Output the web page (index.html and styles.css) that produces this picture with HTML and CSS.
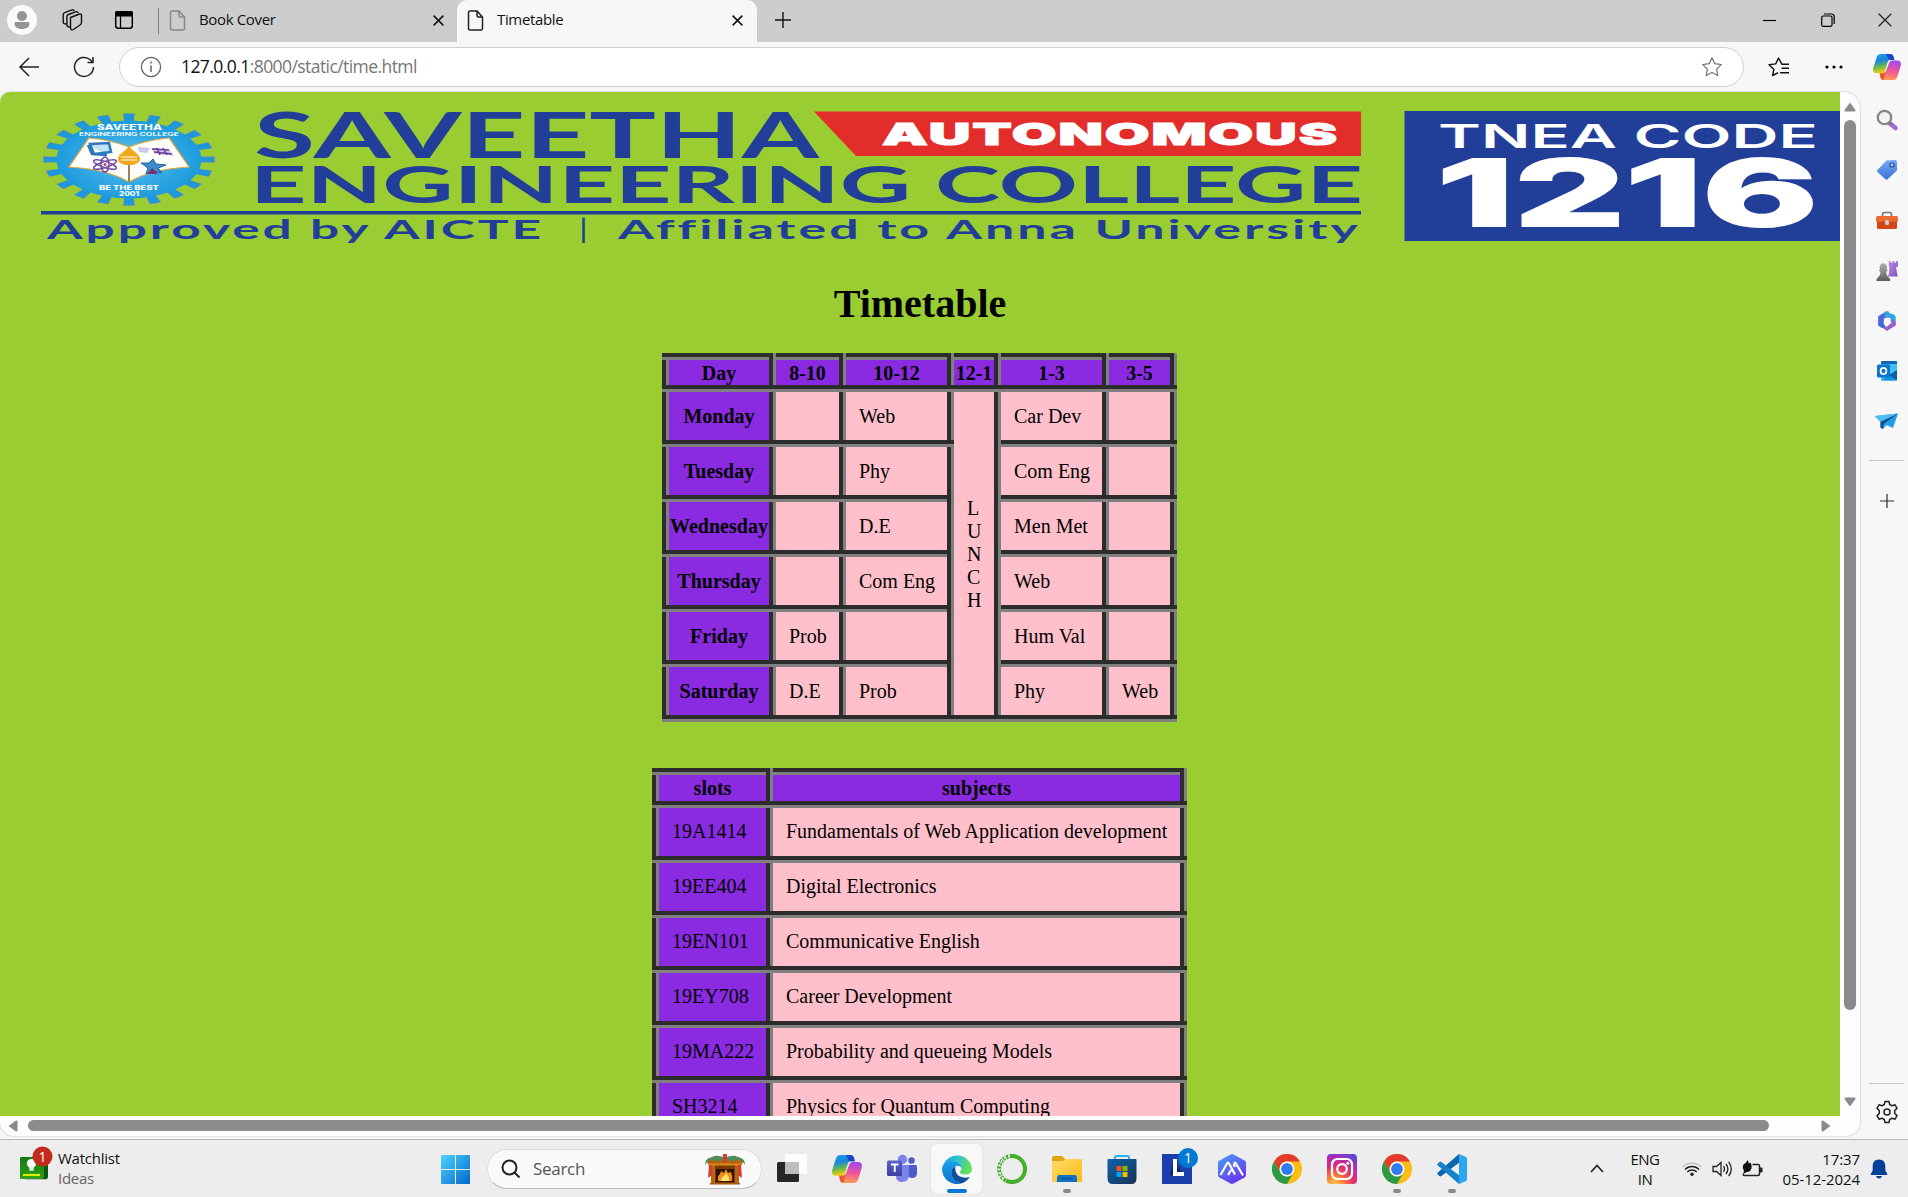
FILE: index.html
```html
<!DOCTYPE html>
<html lang="en">
<head>
<meta charset="utf-8">
<title>Timetable</title>
<link rel="stylesheet" href="styles.css">
</head>
<body>
<svg class="defs" width="0" height="0">
  <defs>
    <linearGradient id="cpA" x1="0" y1="0" x2="0.2" y2="1"><stop offset="0" stop-color="#1b9cf0"/><stop offset=".4" stop-color="#1f86d8"/><stop offset=".65" stop-color="#5bb560"/><stop offset="1" stop-color="#f3d000"/></linearGradient>
    <linearGradient id="cpB" x1="0.5" y1="0" x2="0.3" y2="1"><stop offset="0" stop-color="#a24be8"/><stop offset=".5" stop-color="#f0559a"/><stop offset="1" stop-color="#ffa04a"/></linearGradient>
    <linearGradient id="win" x1="0" y1="0" x2="1" y2="1"><stop offset="0" stop-color="#4fd4ff"/><stop offset="1" stop-color="#0067cc"/></linearGradient>
    <linearGradient id="edgeA" x1="0" y1="0" x2="1" y2=".3"><stop offset="0" stop-color="#1b9de2"/><stop offset=".5" stop-color="#2cc3d0"/><stop offset="1" stop-color="#62e05a"/></linearGradient>
    <linearGradient id="edgeB" x1="0" y1="0" x2="0" y2="1"><stop offset="0" stop-color="#1ba0e8"/><stop offset="1" stop-color="#0873d2"/></linearGradient>
    <linearGradient id="fold" x1="0" y1="0" x2="1" y2="1"><stop offset="0" stop-color="#ffdc6b"/><stop offset="1" stop-color="#fbbc16"/></linearGradient>
    <linearGradient id="store" x1="0" y1="0" x2="1" y2="1"><stop offset="0" stop-color="#0d61ab"/><stop offset="1" stop-color="#183454"/></linearGradient>
    <linearGradient id="hex" x1="0" y1="0" x2="0.6" y2="1"><stop offset="0" stop-color="#48a0f6"/><stop offset="1" stop-color="#6a35f0"/></linearGradient>
    <radialGradient id="insta" cx=".25" cy="1.05" r="1.15"><stop offset="0" stop-color="#ffd24d"/><stop offset=".3" stop-color="#fb7a35"/><stop offset=".55" stop-color="#e2306d"/><stop offset=".8" stop-color="#b32bb0"/><stop offset="1" stop-color="#5a49d6"/></radialGradient>
    <linearGradient id="tag" x1="0" y1="0" x2="0" y2="1"><stop offset="0" stop-color="#76a9f5"/><stop offset="1" stop-color="#3b6fd6"/></linearGradient>
    <linearGradient id="rook" x1="0" y1="0" x2="1" y2="1"><stop offset="0" stop-color="#c08cf0"/><stop offset="1" stop-color="#8350b8"/></linearGradient>
    <linearGradient id="pawn" x1="0" y1="0" x2="0" y2="1"><stop offset="0" stop-color="#b0b0b0"/><stop offset="1" stop-color="#5e5e5e"/></linearGradient>
    <radialGradient id="crest"><stop offset="0" stop-color="#6cc6f2"/><stop offset=".6" stop-color="#35a9e4"/><stop offset="1" stop-color="#1d9bdc"/></radialGradient>
    <linearGradient id="teams" x1="0" y1="0" x2="0" y2="1"><stop offset="0" stop-color="#5b62c8"/><stop offset="1" stop-color="#3a3f9e"/></linearGradient>
    <linearGradient id="green" x1="0" y1="0" x2="0" y2="1"><stop offset="0" stop-color="#137a13"/><stop offset="1" stop-color="#2ca016"/></linearGradient>
    <symbol id="copilot" viewBox="0 0 28 26">
      <path d="M8 0h9c2 0 3 1 3.600 3l.6 2.500h-3c-2 0-3 1-3.600 3L12 17c-.6 1.700-1.700 2.300-3.400 2.300H3.500C.6 19.300-.6 17 .3 13.800L3.600 3.500C4.400 1 5.800 0 8 0z" fill="url(#cpA)"/>
      <path d="M13 0h4c2 0 3 1 3.600 3l.8 3h-3.600c-2 0-2.500-1-3-2.500z" fill="#1a45c8"/>
      <path d="M20 26h-9c-2 0-3-1-3.600-3l-.7-3.700h3c2 0 3-1 3.600-3L16 9c.6-1.700 1.700-2.500 3.400-2.500h5.100c2.900 0 4.100 2.500 3.200 5.500l-3.300 10.500c-.8 2.500-2.200 3.500-4.400 3.500z" fill="url(#cpB)"/>
      <path d="M6.700 19.300h3c1.500 0 2.500-.7 3.200-2l-1.700 7.200c-.3 1-.8 1.500-1.500 1.400C8.300 25.600 7.700 24.500 7.400 23z" fill="#f0562f"/>
    </symbol>
    <symbol id="page" viewBox="0 0 16 21"><path d="M3 1h6.500L15 7v11.500c0 .9-.6 1.500-1.500 1.500h-11C1.600 20 1 19.400 1 18.500V2.500C1 1.600 1.600 1 2.500 1zM9.500 1v4.500c0 .9.600 1.500 1.500 1.500h4" fill="none" stroke="currentColor" stroke-width="1.500"/></symbol>
    <symbol id="cross" viewBox="0 0 12 12"><path d="M1.500 1.500l9 9m0-9l-9 9" stroke="currentColor" stroke-width="1.400" fill="none"/></symbol>
    <symbol id="plus" viewBox="0 0 18 18"><path d="M9 1v16M1 9h16" stroke="currentColor" stroke-width="1.400" fill="none"/></symbol>
    <symbol id="chrome" viewBox="0 0 30 30">
      <circle cx="15" cy="15" r="15" fill="#fbbc14"/>
      <path d="M2 7.500A15 15 0 0 1 28 7.500H15A7.500 7.500 0 0 0 8.500 18.750z" fill="#e33b2e"/>
      <path d="M2 7.500l6.500 11.250A7.500 7.500 0 0 0 21.500 18.750L15 30A15 15 0 0 1 2 7.500z" fill="#2a9a48"/>
      <circle cx="15" cy="15" r="7.400" fill="#fff"/><circle cx="15" cy="15" r="5.900" fill="#2f7cec"/>
    </symbol>
  </defs>
</svg>

<header class="tabstrip">
  <span class="cell w44"><svg width="30" height="30" viewBox="0 0 30 30"><circle cx="15" cy="15" r="15" fill="#fafafa"/><circle cx="15" cy="11" r="5" fill="#949494"/><path d="M8 17h14c1.500 5-2.500 7-7 7s-8.500-2-7-7z" fill="#949494"/></svg></span>
  <span class="cell w55"><svg width="22" height="22" viewBox="0 0 22 22" fill="none" stroke="#111" stroke-width="1.400"><path d="M9.500 8.500l9-3.500c1-.3 2 .3 2 1.300v7.400c0 1-.5 1.700-1.500 2.300l-6.500 4.500c-1.500.8-3 .2-3-1.500z"/><path d="M9 18l-1.500-.2c-1-.2-1.600-.8-1.600-1.800V7.500c0-1 .6-1.700 1.600-2L15 2.700c1-.3 1.800.2 2 1.300"/><path d="M5.500 15l-1.800-.3c-1-.2-1.500-.8-1.500-1.800V5.600c0-1 .5-1.700 1.500-2L11 .9c1-.3 1.800 0 2.200 1"/></svg></span>
  <span class="cell w50"><svg width="20" height="20" viewBox="0 0 20 20"><rect x="1.700" y="1.700" width="16.600" height="16.600" rx="2.500" fill="none" stroke="#000" stroke-width="1.500"/><path d="M1 6.500V3c0-1.200.8-2 2-2h14c1.200 0 2 .8 2 2v3.500z"/><path d="M6.500 6v12.500" stroke="#000" stroke-width="1.300"/></svg></span>
  <span class="sep"></span>
  <div class="tab">
    <svg class="doc dim" width="17" height="21"><use href="#page"/></svg><span class="tabname">Book Cover</span><svg class="x" width="13" height="13"><use href="#cross"/></svg>
  </div>
  <div class="tab active">
    <svg class="doc" width="17" height="21"><use href="#page"/></svg><span class="tabname">Timetable</span><svg class="x" width="13" height="13"><use href="#cross"/></svg>
  </div>
  <span class="cell w52"><svg width="18" height="18"><use href="#plus"/></svg></span>
  <div class="winctl">
    <svg width="14" height="14"><path d="M0 7.500h13" stroke="#000" stroke-width="1.200"/></svg>
    <svg width="14" height="14" fill="none" stroke="#000" stroke-width="1.200"><rect x=".7" y="3" width="10.300" height="10.300" rx="1.500"/><path d="M3 1h7.500c1.700 0 2.700 1 2.700 2.700V11"/></svg>
    <svg width="14" height="14"><path d="M.7.7l12.600 12.600m0-12.600L.7 13.300" stroke="#222" stroke-width="1.300"/></svg>
  </div>
</header>

<nav class="toolbar">
  <span class="cell w57"><svg width="22" height="20" fill="none" stroke="#222" stroke-width="1.500"><path d="M21 10H2m9-9l-9 9 9 9"/></svg></span>
  <span class="cell w53"><svg width="22" height="22" fill="none" stroke="#222" stroke-width="1.500"><path d="M20.500 11a9.500 9.500 0 1 1-3-7l2 2M20 1v5.500h-5.500"/></svg></span>
  <div class="address">
    <svg width="22" height="22" fill="none" stroke="#666" stroke-width="1.300"><circle cx="11" cy="11" r="9.600"/><path d="M11 9.500V16M11 5.500v2" stroke-width="1.500"/></svg>
    <span class="url"><b>127.0.0.1</b>:8000/static/time.html</span>
    <svg class="star" width="22" height="22" viewBox="0 0 22 22" fill="none" stroke="#777" stroke-width="1.300" stroke-linejoin="round"><path d="M11 1.800l2.900 5.900 6.400.9-4.700 4.500 1.200 6.400-5.800-3-5.800 3 1.200-6.400L1.700 8.600l6.400-.9z"/></svg>
  </div>
  <svg class="favs" width="22" height="20" viewBox="0 0 22 20" fill="none" stroke="#111" stroke-width="1.400" stroke-linejoin="round"><path d="M21 7.300h-7L10.500 1 7.700 6.900 1 7.700l4.800 4.600L4.600 18.500l5.600-2.800M13.500 11.200H21M12 15.700h9"/></svg>
  <svg class="dots" width="18" height="4"><circle cx="2" cy="2" r="1.600"/><circle cx="9" cy="2" r="1.600"/><circle cx="16" cy="2" r="1.600"/></svg>
  <svg class="cop" width="28" height="26"><use href="#copilot"/></svg>
</nav>

<div class="main">
  <div class="frame">
    <div class="upper">
      <main class="page">
        <svg class="banner" width="1840" height="152" viewBox="0 92 1840 152">
          <g transform="translate(129 159.500) scale(1.86 1)">
            <circle r="41" fill="none" stroke="#c3ab4e" stroke-width="11" pathLength="40" stroke-dasharray=".98 1.020" stroke-dashoffset=".49"/>
            <circle r="41" fill="none" stroke="#1e98d8" stroke-width="10" pathLength="40" stroke-dasharray=".86 1.140" stroke-dashoffset=".43"/>
            <circle r="39" fill="url(#crest)"/>
          </g>
          <path d="M89 138q22 2 40 9 18-7 40-9l20 29q-38 2-60 15-22-13-60-15z" fill="#fff" stroke="#e8a93c" stroke-width="1.200"/>
          <path d="M129 158v24" stroke="#9a8550" stroke-width="2"/>
          <path d="M129 146c5 7 11 8 11 13 0 4-5 6-11 6s-11-2-11-6c0-5 6-6 11-13z" fill="#f2a91c"/><path d="M121 157h16M121 160h16" stroke="#fff" stroke-width="1"/>
          <path d="M90 144l19-1 2 9-17 2zM88 145l4 9 15 1" fill="#bfe2f5" stroke="#2f77bd" stroke-width="2.500"/>
          <g fill="none" stroke="#6d479f" stroke-width="1.400"><ellipse cx="105" cy="164.500" rx="4" ry="7.500"/><ellipse cx="105" cy="164.500" rx="12" ry="3" transform="rotate(18 105 164.500)"/><ellipse cx="105" cy="164.500" rx="12" ry="3" transform="rotate(-18 105 164.500)"/></g><circle cx="105" cy="164.500" r="1.500" fill="#d8337c"/>
          <path d="M138 147l12 1-3 5-8-1zM151 148l18 1 5 7-19-2z" fill="#cfc6e6"/><path d="M152 149l17 1M154 152l18 2M157 148l3 7M163 148l4 7" stroke="#6b3c98" stroke-width="1.500"/>
          <path d="M141 163l8 0 4-4 3 5 10 1-8 3 4 5-9-2-7 3 2-6z" fill="#3a8dcc" stroke="#275d9b"/><path d="M147 174l5-6 6 6z" fill="#7c2d6e"/>
          <g fill="#fff" font-family="Inter, sans-serif" font-weight="800" text-anchor="start">
            <text x="97" y="130" font-size="7.500" textLength="65" lengthAdjust="spacingAndGlyphs">SAVEETHA</text>
            <text x="79" y="136" font-size="5" font-weight="600" textLength="100" lengthAdjust="spacingAndGlyphs">ENGINEERING COLLEGE</text>
            <text x="99" y="190" font-size="6" textLength="60" lengthAdjust="spacingAndGlyphs">BE THE BEST</text>
            <text x="119" y="196" font-size="6" textLength="20" lengthAdjust="spacingAndGlyphs">2001</text>
          </g>
          <g fill="#213f99" font-family="Lato, sans-serif" font-weight="700">
            <text x="254" y="158" font-size="63.500" textLength="565" lengthAdjust="spacingAndGlyphs">SAVEETHA</text>
            <text x="250" y="203" font-size="52.500" textLength="1113" lengthAdjust="spacingAndGlyphs">ENGINEERING COLLEGE</text>
            <rect x="41" y="211" width="1320" height="3.500"/>
            <g font-size="26" letter-spacing="1.500">
              <text x="47" y="239" textLength="497" lengthAdjust="spacingAndGlyphs">Approved by AICTE</text>
              <text x="580" y="239">|</text>
              <text x="618" y="239" textLength="743" lengthAdjust="spacingAndGlyphs">Affiliated to Anna University</text>
            </g>
          </g>
          <path d="M814 111.500h547V156H856z" fill="#e32d2b"/>
          <text x="882" y="144.500" font-size="30" font-weight="900" fill="#fff" stroke="#fff" stroke-width="1" letter-spacing="1" font-family="Inter, sans-serif" textLength="457" lengthAdjust="spacingAndGlyphs">AUTONOMOUS</text>
          <rect x="1404.500" y="111" width="436" height="130" fill="#213f99"/>
          <text x="1438" y="147.500" font-size="32.500" font-weight="600" fill="#fff" font-family="Inter, sans-serif" textLength="380" lengthAdjust="spacingAndGlyphs">TNEA CODE</text>
          <text x="1437" y="226" font-size="92" font-weight="800" fill="#fff" stroke="#fff" stroke-width="2" font-family="Inter, sans-serif" textLength="381" lengthAdjust="spacingAndGlyphs">1216</text>
        </svg>
        <h1>Timetable</h1>
        <table class="week">
          <colgroup><col class="c1"><col class="c2"><col class="c3"><col class="c4"><col class="c3"><col class="c6"></colgroup>
          <tr class="head"><th>Day</th><th>8-10</th><th>10-12</th><th>12-1</th><th>1-3</th><th>3-5</th></tr>
          <tr><th>Monday</th><td></td><td>Web</td><td rowspan="6">L<br>U<br>N<br>C<br>H</td><td>Car Dev</td><td></td></tr>
          <tr><th>Tuesday</th><td></td><td>Phy</td><td>Com Eng</td><td></td></tr>
          <tr><th>Wednesday</th><td></td><td>D.E</td><td>Men Met</td><td></td></tr>
          <tr><th>Thursday</th><td></td><td>Com Eng</td><td>Web</td><td></td></tr>
          <tr><th>Friday</th><td>Prob</td><td></td><td>Hum Val</td><td></td></tr>
          <tr><th>Saturday</th><td>D.E</td><td>Prob</td><td>Phy</td><td>Web</td></tr>
        </table>
        <table class="slots">
          <colgroup><col class="s1"><col class="s2"></colgroup>
          <tr class="head"><th>slots</th><th>subjects</th></tr>
          <tr><td>19A1414</td><td>Fundamentals of Web Application development</td></tr>
          <tr><td>19EE404</td><td>Digital Electronics</td></tr>
          <tr><td>19EN101</td><td>Communicative English</td></tr>
          <tr><td>19EY708</td><td>Career Development</td></tr>
          <tr><td>19MA222</td><td>Probability and queueing Models</td></tr>
          <tr><td>SH3214</td><td>Physics for Quantum Computing</td></tr>
        </table>
      </main>
      <div class="vbar">
        <svg width="12" height="10"><path d="M6 .5L11.500 8q.4 1.500-1 1.500h-9Q.1 9.500.5 8z" fill="#8b8b8b"/></svg>
        <span class="vthumb"></span>
        <svg class="down" width="12" height="10"><path d="M6 9.500L.5 2Q.1.500 1.500.5h9q1.400 0 1 1.500z" fill="#8b8b8b"/></svg>
      </div>
    </div>
    <div class="hbar">
      <svg width="10" height="12"><path d="M.5 6L8 .5Q9.500.1 9.500 1.500v9q0 1.400-1.500 1z" fill="#8b8b8b"/></svg>
      <span class="hthumb"></span>
      <svg class="right" width="10" height="12"><path d="M9.500 6L2 .5Q.5.1.5 1.500v9q0 1.400 1.500 1z" fill="#8b8b8b"/></svg>
    </div>
  </div>
  <aside class="side">
    <svg class="ic" width="22" height="22" viewBox="0 0 22 22"><path d="M13.500 14l6 5" stroke="#a36bd8" stroke-width="4.500" stroke-linecap="round"/><circle cx="8.500" cy="8.500" r="6.700" fill="#f4f4f4" stroke="#868686" stroke-width="2.300"/><path d="M13 13l2.500 2.500" stroke="#777" stroke-width="2.300"/></svg>
    <svg class="ic" width="22" height="22" viewBox="0 0 22 22"><path d="M10.500 1.500L19 1q2 0 2 2v8.500L11.500 20.300q-1 .8-2 0l-8-7.300q-1-1 0-2z" fill="url(#tag)"/><circle cx="16" cy="6" r="2" fill="#bcd7ff" stroke="#234c94" stroke-width="1.200"/></svg>
    <svg class="ic" width="24" height="20" viewBox="0 0 24 20"><path d="M7.500 5.500v-2q0-2 2-2h5q2 0 2 2v2" fill="none" stroke="#777" stroke-width="1.700"/><rect x="1" y="5" width="22" height="6" rx="1.500" fill="#ed6a30"/><path d="M2 10.500h20v6q0 1.500-1.500 1.500h-17Q2 18 2 16.500z" fill="#d44618"/><rect x="10" y="9" width="4" height="5" rx="1.500" fill="#ccc"/></svg>
    <svg class="ic" width="24" height="24" viewBox="0 0 24 24"><path d="M14 1h2v2h2V1h2v2h2V1h2v6l-2 1 1 7 1 3H13l1-3 .7-7-.7-1z" fill="url(#rook)"/><path d="M8 3.500a4.300 4.300 0 0 1 3.500 6.500l1.500 1.500-2 1.500q0 4 3 6 2 1 1.500 4h-15q-.5-3 1.500-4 3-2 3-6l-2-1.500L4.500 10A4.300 4.300 0 0 1 8 3.500z" fill="url(#pawn)"/></svg>
    <svg class="ic" width="22" height="24" viewBox="0 0 22 24"><path d="M11 1L1.500 6.500V17L6 20l2-8.500L13 7V2z" fill="#8a62d8"/><path d="M9 1.500L18.500 5q2 1 2 3v8L15 13V9L6 7z" fill="#31a7e6"/><path d="M20.500 13v4L11 23l-6-4.500 6-.5 5-4V9z" fill="#9a62c8"/><path d="M1.500 8v9l5 3 3-2-3-4V8L9 6 8 3z" fill="#3c6fd6"/><circle cx="11" cy="12" r="3.500" fill="#f7f7f7"/></svg>
    <svg class="ic" width="22" height="22" viewBox="0 0 22 22"><path d="M5 1h15q1 0 1 1v18.500H5z" fill="#43c0f2"/><path d="M5 2q0-1 1-1h15v3H5z" fill="#0f66b6"/><path d="M21 10v9.500q0 1-1 1H5.500z" fill="#1190de"/><path d="M21 10v10l-8-5z" fill="#0b5ca8"/><rect x="1" y="4.500" width="13" height="13" rx="1.500" fill="#0a73cf"/><ellipse cx="7.500" cy="11" rx="2.900" ry="3.200" fill="none" stroke="#fff" stroke-width="1.800"/></svg>
    <svg class="ic" width="24" height="18" viewBox="0 0 24 18"><path d="M0 3l23-2.500L18 15l-6.500-3L8 16l-2.500-1.500V9z" fill="#239de8"/><path d="M0 3l23-2.500L5.500 9z" fill="#50bdf5"/><path d="M5.500 9L23 .5 8.500 11 8 16l-2.500-1.500z" fill="#124a8c"/></svg>
    <span class="rule"></span>
    <svg class="add" width="16" height="16" viewBox="0 0 18 18"><use href="#plus" width="18" height="18"/></svg>
    <span class="rule low"></span>
    <svg class="gear" width="24" height="24" viewBox="-12 -12 24 24" fill="none" stroke="#222" stroke-width="1.500" stroke-linejoin="round"><path d="M-2-10.500H2L2.700-7.500 5-6.200 8-7.200 10-3.600 7.700-1.500V1.500L10 3.600 8 7.200 5 6.200 2.700 7.500 2 10.500H-2L-2.700 7.500-5 6.200-8 7.200-10 3.600-7.700 1.500V-1.500L-10-3.600-8-7.200-5-6.200-2.700-7.500z"/><circle r="3"/></svg>
  </aside>
</div>

<footer class="taskbar">
  <div class="widget">
    <svg width="34" height="36" viewBox="0 0 34 36"><path d="M6 31h22v3H6z" fill="#bbb"/><rect x="1" y="11" width="28" height="22" rx="2" fill="#0b5a12"/><rect x="1" y="11" width="24" height="22" rx="2" fill="url(#green)"/><path d="M4 29h17" stroke="#d7ee00" stroke-width="2.200"/><circle cx="12.500" cy="17.500" r="4.600" fill="#fff"/><path d="M10.300 20h4.400v4.800h-4.400z" fill="#e6f4e4"/><circle cx="23.500" cy="10.500" r="10" fill="#c42b1c"/><text x="23.500" y="15.500" font-size="14" text-anchor="middle" fill="#fff" font-family="Open Sans, sans-serif">1</text></svg>
    <div class="wtext"><span class="wa">Watchlist</span><span class="wb">Ideas</span></div>
  </div>
  <svg class="start" width="29" height="29" viewBox="0 0 29 29"><path d="M1 0h13v14H0V1q0-1 1-1zM15 0h13q1 0 1 1v13H15zM0 15h14v14H1q-1 0-1-1zM15 15h14v13q0 1-1 1H15z" fill="url(#win)"/></svg>
  <div class="search">
    <svg width="20" height="20" fill="none" stroke="#222" stroke-width="2"><circle cx="8.500" cy="8.500" r="7"/><path d="M13.500 13.500l5 5"/></svg>
    <span>Search</span>
    <svg class="fire" width="42" height="32" viewBox="0 0 42 32"><path d="M7 11h28v20H7z" fill="#7d3b08"/><path d="M7 12h4v19H7zM31 12h4v19h-4z" fill="#b8660e"/><path d="M2 7h38l-2 4H4z" fill="#b5640c"/><path d="M4 10.500h34v2H4z" fill="#d98a1c"/><rect x="12" y="16" width="18" height="13" fill="#2c1204"/><path d="M14 28q-1-5 2-7l1-3 3 2 2-4 2 4 3-1q2 5 1 9z" fill="#f28c12"/><path d="M17 28q0-4 3-5l2-3q4 4 3 8z" fill="#ffdf72"/><path d="M1 12Q1 5 8 4q5-3 13 1 8-4 13-1 7 1 7 8-3-5-7-5-6 2-13 0-7 2-13 0-4 0-7 5z" fill="#4f8c5b"/><rect x="19" y="1" width="4" height="8" fill="#d83a2b"/><path d="M5 12h3v10l-4 3zM34 12h3l1 13-4-3z" fill="#d73b32"/><path d="M6 30h30v1.500H6z" fill="#a8570a"/></svg>
  </div>
  <div class="apps">
    <span class="app"><svg width="30" height="30" viewBox="0 0 30 30"><rect x="0" y="8" width="22" height="20" rx="1.500" fill="#262626"/><rect x="8" y="0" width="22" height="20" rx="1.500" fill="#fff" fill-opacity=".85"/><path d="M8 8h14v12H8z" fill="#bdbdbd"/></svg></span>
    <span class="app"><svg width="30" height="28"><use href="#copilot"/></svg></span>
    <span class="app"><svg width="30" height="30" viewBox="0 0 30 30"><circle cx="24.500" cy="6.500" r="3.200" fill="#5059c9"/><path d="M20 11h8.500q1.500 0 1.500 1.500V19q0 5-5 5-3 0-4-2z" fill="#5059c9"/><circle cx="15.500" cy="5.500" r="4.700" fill="#7b83eb"/><path d="M9 11h13v9.500q0 7.500-7 7.500-6 0-6-6z" fill="#7b83eb"/><rect y="6.500" width="15" height="15.500" rx="1.500" fill="url(#teams)"/><path d="M4 10.500h7.500M7.750 10.500V18" stroke="#fff" stroke-width="1.900"/></svg></span>
    <span class="app on"><svg width="30" height="30" viewBox="0 0 30 30"><path d="M1 11.500A15 15 0 0 1 30 14.500q0 6-7 6-5 0-5-2.500l1.500-3q0-5-6-6Q5 8 1 14z" fill="url(#edgeA)"/><path d="M0 15Q1 7 9 7q9 0 10.500 7-2-3-6-2-5 3-4 8.500Q11 28 19 29.400A15 15 0 0 1 0 15z" fill="url(#edgeB)"/><path d="M13.500 12Q8 15 9.500 21q2 7 9.500 8.400 6-1.400 8.600-6.400-5 1.500-9.600-.5-6-3-4.500-10.500z" fill="#0f4f9c"/></svg></span>
    <span class="app"><svg width="30" height="30" viewBox="0 0 30 30" fill="none" stroke="#43b02a"><path d="M15 2a13 13 0 1 1-6 24.500" stroke-width="4"/><path d="M15 2A13 13 0 0 0 9 26.500" stroke-width="4" stroke-dasharray="2.500 1"/><path d="M13 2A13 13 0 0 0 7 25" stroke="#ededed" stroke-width="1.400" stroke-dasharray="2 2.500"/></svg></span>
    <span class="app run"><svg width="30" height="30" viewBox="0 0 30 30"><path d="M0 4q0-2 2-2h7q1 0 2 1l2 2v5H0z" fill="#e0a40a"/><path d="M0 7h11l2-2h15.500q1.500 0 1.500 1.500V28H0z" fill="url(#fold)"/><path d="M5 28v-4.500Q5 21 7.500 21h15q2.500 0 2.500 2.500V28z" fill="#0f72c4"/><path d="M9 24.500h12" stroke="#0a4d8f" stroke-width="1.300"/></svg></span>
    <span class="app"><svg width="30" height="30" viewBox="0 0 30 30"><path d="M8 6V3.500Q8 2 9.500 2h11Q22 2 22 3.500V6" fill="none" stroke="#25b6f2" stroke-width="2"/><path d="M.5 6q0-1 1-1h27q1 0 1 1v18q0 6-5 6h-19q-5 0-5-6z" fill="url(#store)"/><path d="M9.500 12h5v5h-5z" fill="#f25022"/><path d="M15.500 12h5v5h-5z" fill="#7fba00"/><path d="M9.500 18h5v5h-5z" fill="#00a4ef"/><path d="M15.500 18h5v5h-5z" fill="#ffb900"/></svg></span>
    <span class="app"><svg class="spill" width="30" height="30" viewBox="0 0 30 30"><path d="M0 0h30v30H0z" fill="#1c3fae"/><path d="M12 5L8 21l14 1z" fill="#0a2b5c"/><path d="M13 5v15h9" fill="none" stroke="#fff" stroke-width="4"/><circle cx="26" cy="4" r="10" fill="#0078d4"/><text x="26" y="9" font-size="14" fill="#fff" text-anchor="middle" font-family="Open Sans, sans-serif">1</text></svg></span>
    <span class="app"><svg width="30" height="30" viewBox="0 0 30 30"><path d="M13.500.4q1.500-.8 3 0l11 6Q29 7.300 29 9v12q0 1.700-1.500 2.600l-11 6q-1.500.8-3 0l-11-6Q1 22.700 1 21V9q0-1.700 1.500-2.600z" fill="url(#hex)"/><path d="M3.500 21L10 9.500q1-2 2 0l6 11M11 21l3-5M17 9.500q1-2 2 0l7 12M18 13l-1.500-3" fill="none" stroke="#fff" stroke-width="2.200"/></svg></span>
    <span class="app"><svg width="30" height="30"><use href="#chrome"/></svg></span>
    <span class="app"><svg width="30" height="30" viewBox="0 0 30 30"><rect width="30" height="30" rx="4" fill="url(#insta)"/><g fill="none" stroke="#fff" stroke-width="2.200"><rect x="5" y="5" width="20" height="20" rx="5.500"/><circle cx="15" cy="15" r="4.800"/></g><circle cx="20.800" cy="9.200" r="1.500" fill="#fff"/></svg></span>
    <span class="app run"><svg width="30" height="30"><use href="#chrome"/></svg></span>
    <span class="app run"><svg width="30" height="30" viewBox="0 0 30 30"><path d="M22 0L.8 18.500q-1 1 0 2l1.500 1.500q1 .8 2 .1L23 8z" fill="#0a66ad"/><path d="M22 30L.8 11.500q-1-1 0-2L2.300 8q1-.8 2-.1L23 22z" fill="#1583cb"/><path d="M22 0l7 3q1 .6 1 2v20q0 1.400-1 2l-7 3z" fill="#2aa6f2"/></svg></span>
  </div>
  <div class="tray">
    <svg class="chev" width="14" height="9" fill="none" stroke="#222" stroke-width="1.700"><path d="M1 8l6-6.500L13 8"/></svg>
    <div class="lang"><span>ENG</span><span>IN</span></div>
    <svg class="wifi" width="20" height="16" viewBox="0 0 20 16" fill="none" stroke="#222" stroke-width="1.400"><path d="M.7 6a13 13 0 0 1 18.600 0" stroke="#bbb"/><path d="M3 8.500a9.800 9.800 0 0 1 14 0M5.300 11a6.500 6.500 0 0 1 9.400 0"/><circle cx="10" cy="13.300" r="1.700" fill="#222" stroke="none"/></svg>
    <svg class="vol" width="21" height="18" viewBox="0 0 21 18" fill="none" stroke="#222" stroke-width="1.300"><path d="M1 6.500h3.500L9 2.500v13l-4.500-4H1z"/><path d="M11.500 6.200q2 2.800 0 5.600M14 4q3.700 5 0 10M16.700 1.800q5.200 7.200 0 14.400"/></svg>
    <svg class="bat" width="21" height="18" viewBox="0 0 21 18"><path d="M10.500 4.500H16q1.500 0 1.500 1.500v8q0 1.500-1.500 1.500H2.500Q1 15.500 1 14" fill="none" stroke="#222" stroke-width="1.500"/><path d="M18 7.500h1.500q1 0 1 1v3q0 1-1 1H18z" fill="#222"/><path d="M6 0l.7 3.500L8.500 2.500q2 4 .5 7-1 2.500-4 2.500l-1 .5-3 1.500 1-3Q-1 5 3.500 3z" fill="#111"/></svg>
    <div class="clock"><span class="t1">17:37</span><span class="t2">05-12-2024</span></div>
    <svg class="bell" width="18" height="20" viewBox="0 0 18 20"><path d="M9 .5c4 0 6.300 2.800 6.300 6.500v4.500l2 3.500q.4 1-.8 1H1.500q-1.200 0-.8-1l2-3.500V7C2.700 3.300 5 .5 9 .5zM6 17h6q-.8 2.500-3 2.500T6 17z" fill="#063f97"/></svg>
  </div>
</footer>
</body>
</html>
```
FILE: styles.css
```css
* { box-sizing: border-box; }
body {
  margin: 0;
  width: 1908px;
  height: 1197px;
  overflow: hidden;
  display: flex;
  flex-direction: column;
  background: #f7f7f7;
  font-family: "Open Sans", "Noto Sans", sans-serif;
  color: #111;
}
svg { display: block; flex: none; }
.defs { position: absolute; }
.cell { display: flex; align-items: center; justify-content: center; flex: none; }
.w44 { width: 44px; }
.w50 { width: 50px; }
.w52 { width: 52px; }
.w53 { width: 53px; }
.w55 { width: 55px; }
.w57 { width: 57px; }

/* Tab strip */
.tabstrip { height: 42px; flex: none; display: flex; background: #cdcdcd; }
.tabstrip .cell { height: 40px; }
.sep { width: 1px; height: 26px; margin: 8px 0 0 9px; background: #808080; flex: none; }
.tab { width: 298px; height: 42px; padding: 0 12px 1px 10px; display: flex; align-items: center; font-size: 15px; flex: none; }
.tab .doc { color: #222; }
.tab .dim { color: #888; }
.tabname { margin-left: 13px; letter-spacing: -.35px; flex: 1; color: #111; margin-top: -3px; }
.tab.active { width: 300px; background: #f7f7f7; border-radius: 10px 10px 0 0; padding-right: 13px; }
.winctl { margin-left: auto; display: flex; gap: 43.500px; padding: 13px 16px 0 0; }

/* Toolbar */
.toolbar { height: 50px; flex: none; display: flex; align-items: center; }
.toolbar > .cell { height: 48px; }
.address {
  width: 1625px; height: 40px; margin-left: 9px; padding: 0 20px;
  display: flex; align-items: center;
  border: 1.500px solid #d0d0d0; border-radius: 20px; background: #fff;
}
.url { margin-left: 19px; font-size: 17.500px; letter-spacing: -.57px; color: #767676; margin-top: -2px; }
.url b { font-weight: 400; color: #111; }
.star { margin-left: auto; }
.favs { margin-left: 24px; }
.dots { margin-left: 35px; }
.cop { margin-left: 30px; }

/* Page frame */
.main { height: 1047px; flex: none; display: flex; }
.frame { width: 1860px; height: 1044px; background: #fdfdfd; border-radius: 10px 16px 14px 14px; overflow: hidden; box-shadow: 0 0 2px #aaa; }
.upper { display: flex; height: 1024px; }
.page { width: 1840px; height: 1024px; overflow: hidden; background: #9acd32; font: 20px/23px "Liberation Serif", "Times New Roman", serif; color: #000; }
h1 { margin: 37px 0 26px; font-size: 40px; line-height: 46px; text-align: center; }
table { border-collapse: collapse; table-layout: fixed; }
.week { width: 515px; margin-left: 662px; }
.slots { width: 535px; margin: 46px 0 0 652px; }
th, td { border: 7px groove #808080; height: 55px; padding: 0 0 0 13px; background: pink; text-align: left; vertical-align: middle; white-space: nowrap; }
th { background: blueviolet; padding: 0; text-align: center; }
.slots td { padding-bottom: 1px; }
.slots td:first-child { background: blueviolet; }
.week th, .week td { padding-top: 1px; }
.head th { height: 32px; }
.slots .head th { height: 33px; }
.c1 { width: 107px; }
.c2 { width: 70px; }
.c3 { width: 108px; }
.c4 { width: 47px; }
.c6 { width: 68px; }
.s1 { width: 114px; }
.s2 { width: 414px; }

.vbar { width: 20px; display: flex; flex-direction: column; align-items: center; padding: 10px 1px 0 0; }
.vthumb { width: 12px; height: 890px; margin-top: 8px; border-radius: 6px; background: #8b8b8b; }
.down { margin-top: 87px; }
.hbar { height: 19px; display: flex; align-items: center; padding-left: 8px; }
.hthumb { width: 1741px; height: 11px; margin-left: 10px; border-radius: 6px; background: #8b8b8b; }
.right { margin-left: 52px; }

/* Side panel */
.side { flex: 1; display: flex; flex-direction: column; align-items: center; padding: 3px 0 0 5px; }
.ic { margin: 14px 0 14.300px; height: 22px; }
.rule { width: 35px; height: 1px; margin-top: 13px; background: #c8c8c8; flex: none; }
.add { margin-top: 32px; color: #333; }
.low { margin-top: 574px; }
.gear { margin-top: 16px; }

/* Taskbar */
.taskbar { height: 58px; flex: none; display: flex; align-items: center; border-top: 1px solid #b8b8b8; background: #ededed; }
.widget { display: flex; width: 441px; padding-left: 19px; height: 100%; }
.widget svg { margin-top: 6px; }
.wtext, .lang, .clock { display: flex; flex-direction: column; font-size: 15px; line-height: 20px; }
.wtext { margin: 8px 0 0 5px; letter-spacing: -.25px; }
.wb { color: #666; }
.start { margin-top: 1px; }
.search { width: 275px; height: 40px; margin-left: 17px; padding: 0 15px 0 13px; border: 1px solid #ddd; border-bottom-color: #bbb; border-radius: 20px; background: #fafafa; display: flex; align-items: center; font-size: 17px; color: #555; letter-spacing: -.3px; }
.search span { margin-left: 12px; }
.fire { margin-left: auto; }
.apps { display: flex; margin-left: 2px; }
.app { width: 55px; height: 50px; display: flex; flex-direction: column; align-items: center; padding-top: 10px; }
.app svg { height: 30px; }
.spill { overflow: visible; }
.on { width: 51px; margin: 0 2px; background: #f8f8f8; border-radius: 5px; box-shadow: 0 0 1px #aaa; }
.on::after, .run::after { content: ""; width: 8px; height: 4px; margin-top: 5px; border-radius: 2px; background: #888; }
.on::after { width: 20px; background: #0078d4; }
.tray { display: flex; align-items: center; margin-left: auto; padding-right: 20px; }
.lang { align-items: center; width: 30px; margin-left: 26px; letter-spacing: -.5px; }
.wifi { margin-left: 22px; }
.vol { margin-left: 10px; }
.bat { margin-left: 9px; }
.clock { align-items: flex-end; width: 82px; margin-left: 15px; letter-spacing: -.08px; }
.bell { margin-left: 10px; }
```
